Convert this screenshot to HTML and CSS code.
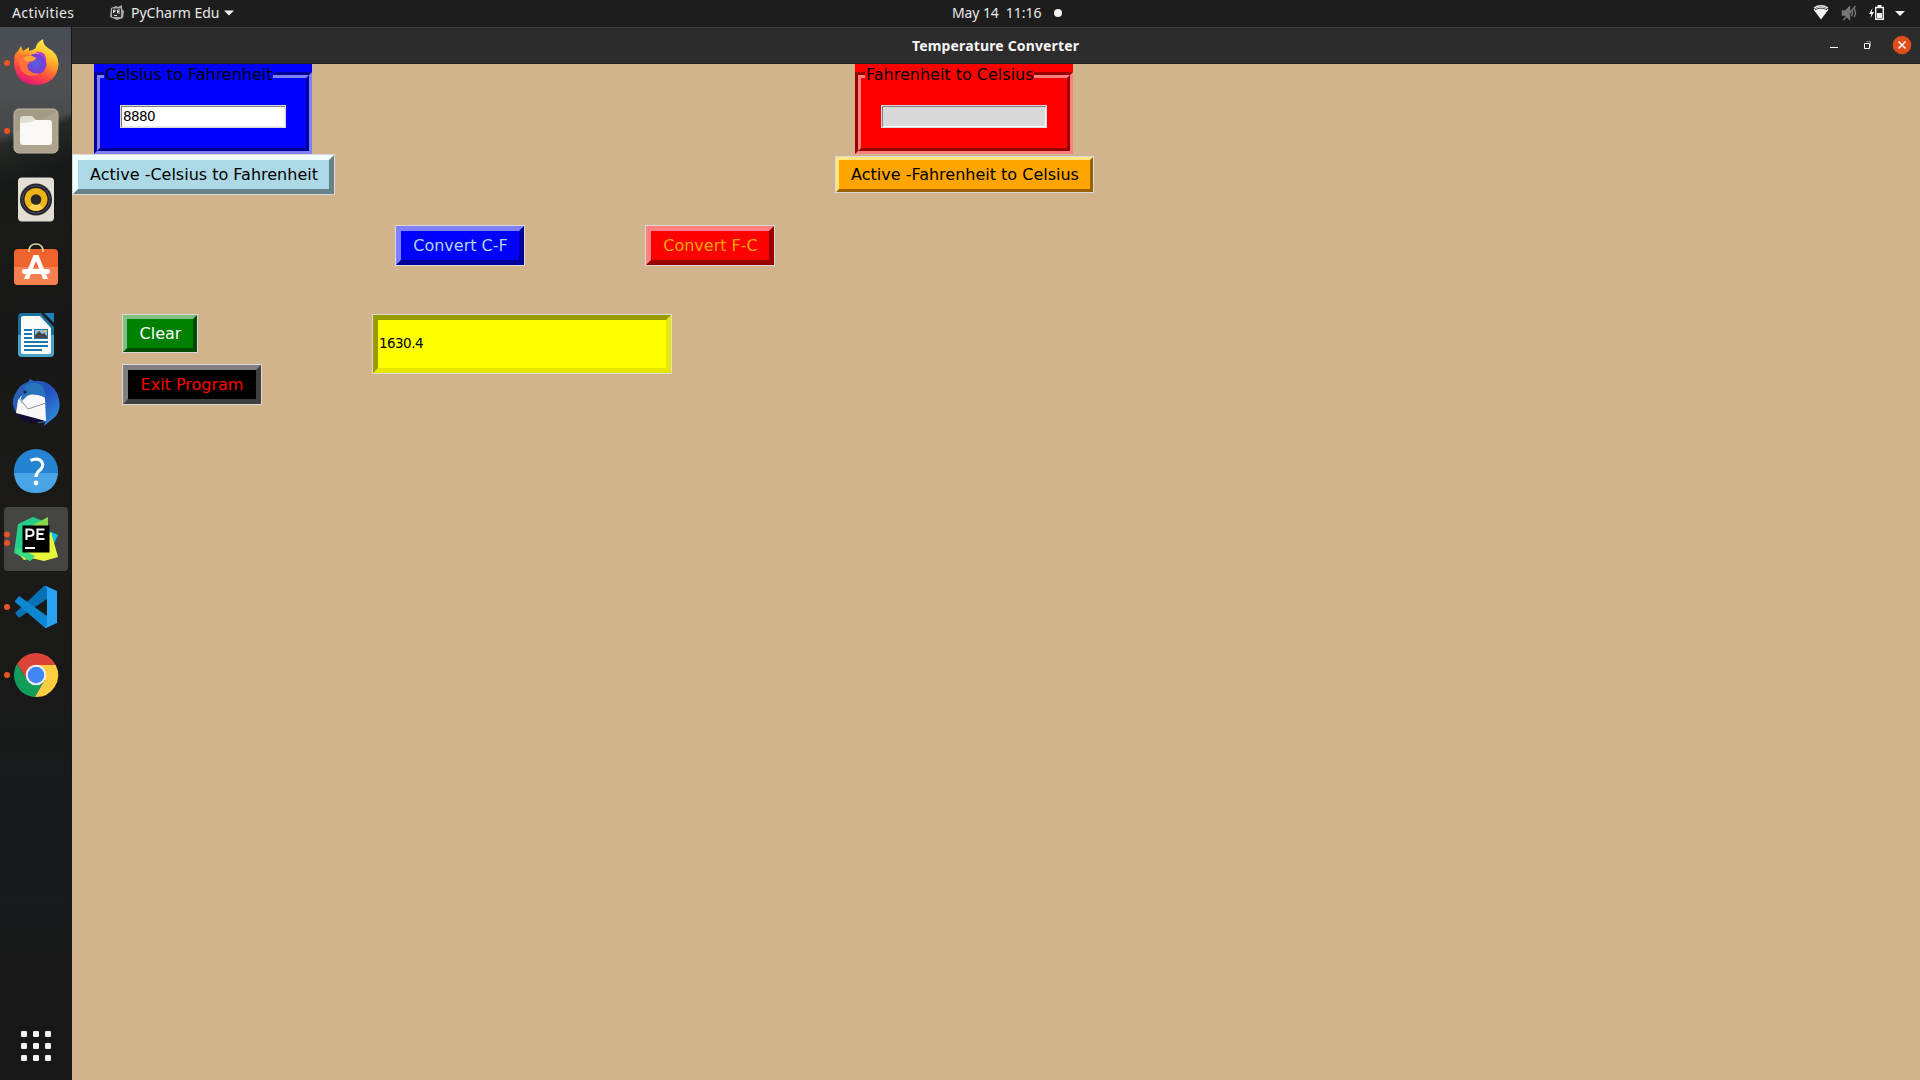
FILE: index.html
```html
<!DOCTYPE html>
<html lang="en">
<head>
<meta charset="utf-8">
<title>Temperature Converter</title>
<link rel="stylesheet" href="styles.css">
</head>
<body>
<header class="topbar">
  <span class="activities">Activities</span>
  <div class="appmenu">
    <svg class="app-icon" width="16" height="16" viewBox="0 0 16 16"><path d="M2 3L7 1L9 2L13 0L13 4L15 6L14 13L8 15L1 12Z" fill="#aaa"/><path d="M3 3.500h9v8.500h-9z" fill="#292929"/><path d="M4.500 8V5h1.500q1 .800 0 1.600H4.500M11 5H8.500v3H11M8.500 6.500h2M5 10.500h3" stroke="#eee" fill="none" stroke-width=".9"/></svg>
    <span class="appname">PyCharm Edu</span>
    <svg class="caret" width="10" height="6" viewBox="0 0 10 6"><path d="M0 .5h10L5 5.500z" fill="#f2f2f2"/></svg>
  </div>
  <div class="clock"><span class="date">May 14</span><span class="time">11:16</span><i class="notice"></i></div>
  <svg class="status" width="96" height="26" viewBox="1812 0 96 26">
    <path d="M1813.500 9.500Q1821 4 1828.500 9.500L1821 19.500Z" fill="#f2f2f2"/><path d="M1814 9Q1821 4.500 1828 9" stroke="#f2f2f2" stroke-width="1.300" fill="none" transform="translate(0 -1)"/><path d="M1815 9.800Q1821 6.500 1827 9.800" stroke="#1d1d1d" stroke-width=".8" fill="none"/>
    <g stroke="#777" fill="none" stroke-width="1.400"><path d="M1842.500 11h3l4-4v12l-4-4h-3z" fill="#777"/><path d="M1851.500 10q2 3 0 6M1854 8.500q3 4.500 0 8.500"/><path d="M1843.500 20L1855.500 6"/></g>
    <path d="M1872.500 8L1869 14h2.300L1870.500 18L1874 12h-2.300z" fill="#f2f2f2"/><path d="M1875.700 7.500h7.600v11.800h-7.600z" fill="none" stroke="#f2f2f2" stroke-width="1.400"/><path d="M1877.500 5h4v2h-4zM1877 13h5v5h-5z" fill="#f2f2f2"/>
    <path d="M1895 11h10l-5 5z" fill="#f2f2f2"/>
  </svg>
</header>
<div class="desktop">
<nav class="dock">
  <svg class="tile" viewBox="-32 -32 64 64"><defs><linearGradient id="fx" x1=".75" y1="0" x2=".3" y2="1"><stop stop-color="#fff14a"/><stop offset=".3" stop-color="#ffc52d"/><stop offset=".5" stop-color="#ff8a2d"/><stop offset=".7" stop-color="#ff4d3c"/><stop offset="1" stop-color="#e2107c"/></linearGradient><radialGradient id="fp"><stop stop-color="#4f62dc"/><stop offset="1" stop-color="#8436d4"/></radialGradient></defs>
    <circle class="run" cx="-29" cy="0" r="3"/><path d="M-21-9L-18-12L-15-17L-13-12L-7-16L-7-12Q0-14 0-16Q1-21 7-24Q7-18 12-15Q22-10 22.500 1Q21 21 0 22Q-21 21-22 0Q-22-5-21-9Z" fill="url(#fx)"/><circle cy="1" r="10.500" fill="url(#fp)"/><path d="M-18-6Q-11-10-6-8L0-5Q-1-2-6-1Q-10 2-8 6Q-3 12 5 10Q-6 17-14 8Q-17 3-18-6Z" fill="#ff7139"/><path d="M-13-5Q-9-8-5-7.500L0-5Q-1-2-6-2Q-9 0-13-5Z" fill="#ffa436"/><path d="M-1-11Q11-13 10-1Q7-9-1-11" fill="#ad3be1"/></svg>
  <svg class="tile" viewBox="-32 -32 64 64"><circle class="run" cx="-29" cy="0" r="3"/><rect x="-22" y="-22" width="44" height="44" rx="5" fill="#a39b84" stroke="#c1b9a5"/><path d="M-22 2L22-20V18Q22 22 17 22H-18Q-22 21-22 18Z" fill="#b2aa94" opacity=".6"/><path d="M-16 0V-12Q-16-15-13-15H-4L0-11H14V0Z" fill="#dfdcd0"/><path d="M-16-8L-4-9L-1-11H13Q16-11 16-8V11Q16 14 13 14H-13Q-16 14-16 11Z" fill="#faf9f8"/></svg>
  <svg class="tile" viewBox="-32 -32.500 64 64"><rect x="-18" y="-22" width="36" height="44" rx="4" fill="#e2ded4"/><circle cy="0" r="16" fill="#28282e"/><circle cy="0" r="13.500" fill="#15151b" stroke="#51516a"/><circle cy="0" r="11.500" fill="#ebb51a"/><path d="M0 0L-7 8.500Q0 14 7 8.500Z" fill="#f8d34e"/><circle cy="0" r="5.300" fill="#292929"/></svg>
  <svg class="tile" viewBox="-32 -32 64 64"><rect x="-22" y="-18" width="44" height="36" rx="4" fill="#ef632d"/><path d="M-22 0H22V14Q22 18 18 18H-18Q-22 18-22 14Z" fill="#f58050"/><path d="M-7-15V-17Q-6-23 0-23Q6-23 7-17V-15" fill="none" stroke="#eadbad" stroke-width="1.600"/><path d="M-2.500-12H2.500L12 12H7L0-6L-7 12H-12Z" fill="#fff"/><rect x="-14" y="2" width="28" height="5" rx="2" fill="#fff"/></svg>
  <svg class="tile" viewBox="-32 -32 64 64"><path d="M-14-22H5L18-8V18Q18 22 14 22H-14Q-18 22-18 18V-18Q-18-22-14-22Z" fill="#1a6f9d"/><path d="M-18 0H18V18Q18 22 14 22H-14Q-18 22-18 18Z" fill="#4ba2c9"/><path d="M8-22H18V-12Z" fill="#1b81b8"/><path d="M-15-17Q-15-19-13-19H4L15-7V17Q15 19 13 19H-13Q-15 19-15 17Z" fill="#fafafa"/><path d="M-12-5H-4M-12-1H-4M-12 3H-4M-12 7H12M-12 11H12M-12 15H6" stroke="#1c78a9" stroke-width="1.800"/><path d="M-2-6H12V4H-2Z" fill="#1c78a9"/><path d="M-1-5H11V3H-1Z" fill="#9dbed0"/><path d="M-1 3V0L3-4L6-1L8-2L11 1V3Z" fill="#454545"/><path d="M8-5H11V-2Z" fill="#f4cb25"/></svg>
  <svg class="tile" viewBox="-32 -32 64 64"><defs><linearGradient id="tb" x2="1" y2="1"><stop stop-color="#2969b3"/><stop offset=".5" stop-color="#244fc0"/><stop offset="1" stop-color="#319bdc"/></linearGradient></defs><path d="M-6-24L-2-22Q13-24 21-10Q27 5 19 14L14 18L8 23L9 19L3 20L-18 12Q-27 1-21-9Q-15-20-8-21Z" fill="url(#tb)"/><path d="M-21 8L9 18L-2 20Q-14 20-21 8Z" fill="#160b32"/><path d="M-15-7Q-4-11 9-6L10 18L-20 10L-18-3Z" fill="#f8f8f8"/><path d="M-17-5L-8 6L10 0" fill="none" stroke="#8f8f95"/><path d="M-15-5L-11-16Q-8-21 0-20Q11-17 9-5Q0-12-9-7L-15-1Z" fill="#2874bb"/><path d="M-17-5L-13-3L-14 1Z" fill="#7fc1df"/><circle cx="-11" cy="-11" r="1.700" fill="#15294a"/></svg>
  <svg class="tile" viewBox="-32 -32 64 64"><circle r="22" fill="#2484d2"/><path d="M-22 2H22Q20 22 0 22Q-20 22-22 2" fill="#48a4e4"/><path d="M-5.500-10.500Q0-13 4-11Q9-7 5-2Q0 2 0 6" fill="none" stroke="#fff" stroke-width="3.200"/><circle cy="12" r="2.400" fill="#fff"/></svg>
  <svg class="tile active" viewBox="-32 -32 64 64"><circle class="run" cx="-29" cy="-4.500" r="3"/><circle class="run" cx="-29" cy="4" r="3"/><path d="M-18-15L-3-22L7-18L4 14L-6 22L-22 14Z" fill="#25cf87"/><path d="M-3-14L12-22V-8H-3Z" fill="#86d849"/><path d="M13-8L22-4L16 9L10 11V-8Z" fill="#08c4ed"/><path d="M-19 13H-1L15-7L22 18L8 22L-5 19L-12 21Z" fill="#e9f63c"/><path d="M-19 8L-1 17L-6 22L-20 14Z" fill="#38dc83"/><path d="M-13.500-13.500H13.500V13.500H-13.500Z" fill="#000"/><path d="M-9.500 1V-9.500H-6.500Q-2.500-9.500-2.500-6.200Q-2.500-3-6.500-3H-9.500M8.500-9.500H1.500V0H8.500M1.500-5H7.500" stroke="#f4f4f4" stroke-width="2.200" fill="none"/><path d="M-11 9H-1" stroke="#fff" stroke-width="1.800"/></svg>
  <svg class="tile" viewBox="-32 -32 64 64"><circle class="run" cx="-29" cy="0" r="3"/><path d="M-21 6L8-21L11-20V-8L-17 11Z" fill="#0871b5"/><path d="M-21-6L-17-11L11 9V21L8 20L-21-5Z" fill="#0d87cf"/><path d="M10-21L21-16V16L10 21L8 20V20Q11 20 11 17V-17Q11-20 8-20Z" fill="#28a2f1"/></svg>
  <svg class="tile" viewBox="-32 -32 64 64"><circle class="run" cx="-29" cy="0" r="3"/><path d="M-19.050-11A22 22 0 0 1 19.700-10H0L-8.660 5Z" fill="#db4437"/><path d="M-19.050-11A22 22 0 0 0-1 22L8.660 5L0 10L-8.660 5Z" fill="#109d58"/><path d="M19.700-10A22 22 0 0 1-1 22L8.660 5L0-10Z" fill="#ffcd40"/><circle r="10.300" fill="#f1f1f1"/><circle r="8.300" fill="#4285f4"/></svg>
  <svg class="launcher" width="30" height="30" viewBox="0 0 30 30" fill="#f2f2f0"><g id="dots"><rect width="6" height="6" rx="1.200"/><rect x="12" width="6" height="6" rx="1.200"/><rect x="24" width="6" height="6" rx="1.200"/></g><use href="#dots" y="12"/><use href="#dots" y="24"/></svg>
</nav>
<main class="window">
  <div class="titlebar"><span class="title">Temperature Converter</span>
    <svg class="controls" width="90" height="35" viewBox="1824 28 90 35"><path d="M1830 47.500h8" stroke="#fff"/><path d="M1866.500 41.500h4v5" fill="none" stroke="#8d8d8d"/><path d="M1864.500 43.500h5v5h-5z" fill="none" stroke="#fff"/><circle cx="1902" cy="45" r="9.300" fill="#e04e1b"/><path d="M1898.500 41.500l7 7M1905.500 41.500l-7 7" stroke="#fff" stroke-width="1.500"/></svg>
  </div>
  <div class="canvas">
    <section class="converters">
      <div class="group">
        <div class="frame blue"><div class="groove"><div class="well"><span class="legend">Celsius to Fahrenheit</span><div class="entry">8880</div></div></div></div>
        <button class="btn b5 pale">Active -Celsius to Fahrenheit</button>
      </div>
      <div class="group">
        <div class="frame red"><div class="groove"><div class="well"><span class="legend">Fahrenheit to Celsius</span><div class="entry disabled"></div></div></div></div>
        <button class="btn b3 orange">Active -Fahrenheit to Celsius</button>
      </div>
    </section>
    <section class="actions">
      <button class="btn b5 cf">Convert C-F</button>
      <button class="btn b5 fc">Convert F-C</button>
    </section>
    <section class="results">
      <div class="side">
        <button class="btn b4 clear">Clear</button>
        <button class="btn b5 exit">Exit Program</button>
      </div>
      <div class="output"><div class="output-text">1630.4</div></div>
    </section>
  </div>
</main>
</div>
</body>
</html>
```
FILE: styles.css
```css
* { box-sizing: border-box; }
body { margin: 0; width: 1920px; height: 1080px; overflow: hidden; background: #1d1d1d; font-family: "DejaVu Sans", sans-serif; display: flex; flex-direction: column; }
.topbar { height: 27px; flex: none; background: #1d1d1d; color: #e8e8e8; font: 14px/26px "Noto Sans", sans-serif; display: grid; grid-template-columns: 97px 855px 856px 1fr; padding-left: 12px; white-space: nowrap; }
.activities { letter-spacing: .4px; }
.appmenu { display: flex; align-items: center; height: 26px; }
.appname { margin-left: 6px; }
.caret { margin-left: 4px; }
.clock { display: flex; align-items: center; margin-left: -12px; height: 26px; }
.date { letter-spacing: -.1px; }
.time { margin-left: 7px; }
.notice { width: 8px; height: 8px; border-radius: 50%; background: #f2f2f2; margin-left: 12px; }
.status { margin-left: -8px; }
.desktop { flex: 1; display: flex; }
.dock { width: 72px; height: 1053px; padding: 4px 4px 19px; display: flex; flex-direction: column; align-items: center; gap: 4px; border-right: 1px solid #171717; background:
  linear-gradient(160deg, transparent 0 104px, #252a26 112px, #171a18 150px, #191917 185px, transparent 300px) no-repeat 0 0 / 100% 300px,
  linear-gradient(#484c54 0, #4f5052 60px, #464749 100px, #1c1e1b 170px, #161716 300px, #1b1a18 500px, #191918 650px, #161a1c 800px, #181818 950px); }
.tile { width: 64px; height: 64px; flex: none; }
.active { background: #454543; border-radius: 4px; }
.run { fill: #e95420; }
.launcher { margin-top: auto; }
.window { flex: 1; display: flex; flex-direction: column; }
.titlebar { height: 37px; flex: none; background: #2c2c2c; border-top: 1px solid #3b3b3b; border-bottom: 1px solid #222; display: flex; justify-content: space-between; padding: 0 6px 0 840px; color: #f6f6f6; font: bold 14px/35px "Noto Sans", sans-serif; white-space: nowrap; }
.title { letter-spacing: .15px; }
.canvas { flex: 1; background: #d2b48c; }
.converters { height: 161px; display: flex; gap: 500px; }
.group { display: flex; flex-direction: column; align-items: flex-start; }
.frame { width: 218px; height: 90px; padding-top: 8px; margin-left: 22px; }
.red { margin: 0 0 2px 20px; }
.groove { height: 82px; border: 3px solid; }
.well { height: 76px; border: 3px solid; padding: 0 20px; }
.blue, .blue .legend { background: #00f; }
.red, .red .legend { background: #f00; }
.blue .groove { border-color: #000099 #8080ff #8080ff #000099; }
.blue .well { border-color: #8080ff #000099 #000099 #8080ff; }
.red .groove { border-color: #990000 #ff8080 #ff8080 #990000; }
.red .well { border-color: #ff8080 #990000 #990000 #ff8080; }
.legend { display: block; width: 169px; height: 19px; margin: -13px 0 0 -16px; padding-left: 1px; font-size: 16px; line-height: 19px; color: #000; white-space: nowrap; }
.entry { width: 166px; height: 23px; margin-top: 21px; border: 1px solid #d9d9d9; background: #fff; box-shadow: inset 1px 1px #828282, inset -1px -1px #ececec; padding-left: 2px; font-size: 13.5px; letter-spacing: -.55px; line-height: 21px; color: #000; }
.disabled { background: #d9d9d9; box-shadow: inset 1px 1px #828282, inset -1px -1px #fff; }
.btn { display: block; font: 16px/29px "DejaVu Sans", sans-serif; padding: 0 0 0 1px; border-style: solid; outline: 1px solid #d9d9d9; margin: 1px; white-space: nowrap; text-align: center; }
.b5 { border-width: 5px; }
.b4 { border-width: 4px; }
.b3 { border-width: 3px; }
.pale { width: 261px; background: #add8e6; color: #000; border-color: #f0ffff #68828a #68828a #f0ffff; }
.orange { width: 257px; background: #ffa500; color: #000; border-color: #ffe680 #996300 #996300 #ffe680; }
.actions { height: 89px; padding-left: 323px; display: flex; align-items: flex-start; gap: 120px; }
.cf { width: 128px; background: #00f; color: #add8e6; border-color: #8080ff #000099 #000099 #8080ff; }
.fc { width: 128px; background: #f00; color: #ffa500; border-color: #ff8080 #990000 #990000 #ff8080; }
.results { padding-left: 50px; display: flex; align-items: flex-start; gap: 110px; }
.side { width: 140px; display: flex; flex-direction: column; gap: 11px; }
.clear { width: 74px; background: #008000; color: #fff; border-color: #80c080 #004d00 #004d00 #80c080; }
.exit { width: 138px; padding-left: 0; background: #000; color: #f00; border-color: #808080 #404040 #404040 #808080; }
.output { border: 1px solid #d9d9d9; width: 300px; height: 60px; }
.output-text { height: 58px; border: 5px solid; border-color: #999900 #e6e600 #e6e600 #999900; background: #ff0; padding-left: 1px; font-size: 13.5px; letter-spacing: -.55px; line-height: 47px; color: #000; }
```
